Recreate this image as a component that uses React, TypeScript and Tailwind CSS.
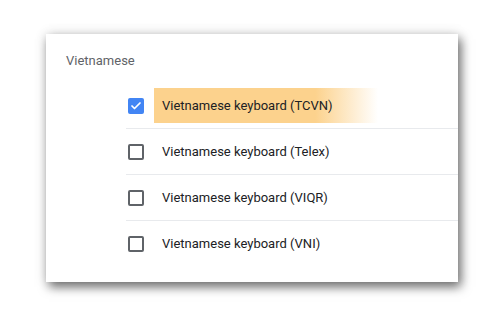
import { Check } from "lucide-react"

const layouts = [
    { name: 'Vietnamese keyboard (TCVN)', checked: true },
    { name: 'Vietnamese keyboard (Telex)', checked: false },
    { name: 'Vietnamese keyboard (VIQR)', checked: false },
    { name: 'Vietnamese keyboard (VNI)', checked: false },
]

const App = () => {
    return (
        <div className="w-[503px] h-[322px] bg-white pt-[34px] pl-[46px] font-['Roboto',sans-serif]">
            <div className="w-[412px] h-[248px] bg-white shadow-[3px_5px_10px_rgba(0,0,0,0.55),0_0_12px_rgba(0,0,0,0.12)]">
                <div className="pt-[17px] pl-[20px] text-[13px] leading-5 text-[#5f6368]">Vietnamese</div>
                <div className="mt-[12px] ml-[80px]">
                    {layouts.map((layout, index) => (
                        <div
                            key={index}
                            className={`flex items-center h-[46px] pl-[2px] ${index < layouts.length - 1 ? 'border-b border-[#e8eaed]' : ''}`}
                        >
                            {layout.checked ? (
                                <div className="w-4 h-4 rounded-[2px] bg-[#4285f4] flex items-center justify-center shrink-0">
                                    <Check className="w-3 h-3 text-white" strokeWidth={3.5} />
                                </div>
                            ) : (
                                <div className="w-4 h-4 rounded-[2px] border-2 border-[#5f6368] shrink-0" />
                            )}
                            <div
                                className={`ml-[10px] h-[35px] w-[224px] px-2 flex items-center text-[13px] text-[#202124] ${layout.checked ? 'bg-[linear-gradient(to_right,#fcd28d_0%,#fcd28d_72%,rgba(252,210,141,0)_100%)]' : ''}`}
                            >
                                {layout.name}
                            </div>
                        </div>
                    ))}
                </div>
            </div>
        </div>
    )
}

export default App
